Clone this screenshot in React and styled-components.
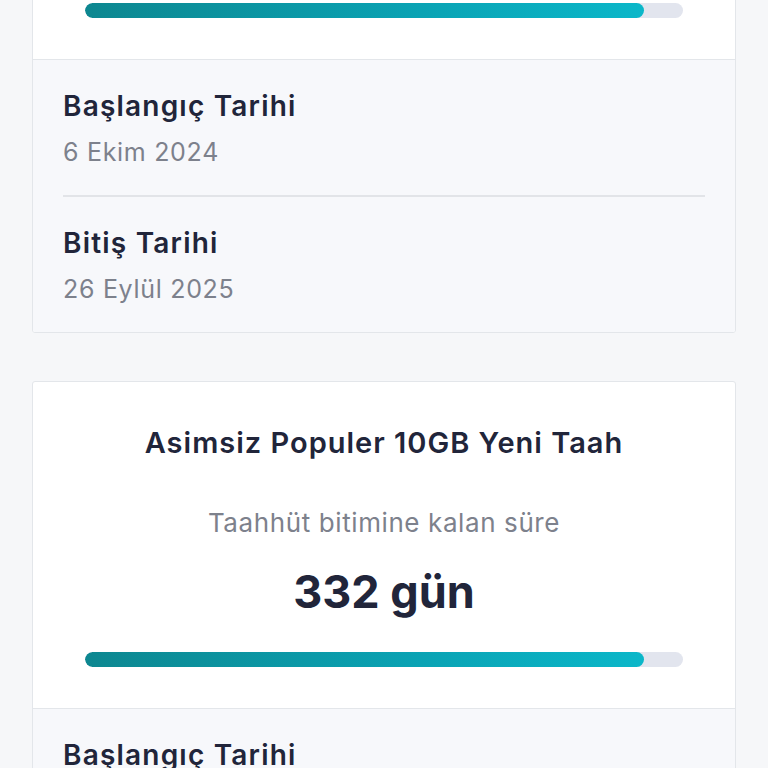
import React from 'react'
import styled, { createGlobalStyle } from 'styled-components'

const GlobalStyle = createGlobalStyle`
  html, body {
    margin: 0;
    padding: 0;
    background: #f6f7f9;
  }
  body {
    font-family: 'Inter', 'Lato', sans-serif;
    color: #21253a;
  }
`

const Page = styled.div`
  width: 768px;
  height: 768px;
  overflow: hidden;
`

// view is scrolled: the first card's top lies above the window
const List = styled.div`
  display: flex;
  flex-direction: column;
  gap: 48px;
  padding: 0 32px;
  margin-top: -268px;
`

const Card = styled.div`
  background: #fff;
  border: 1.5px solid #e3e6ea;
  border-radius: 3px;
  overflow: hidden;
`

const Summary = styled.div`
  display: flex;
  flex-direction: column;
  align-items: center;
  padding: 43px 52px 41px;
  border-bottom: 1.5px solid #e3e6ea;
`

const PlanName = styled.div`
  font-size: 29px;
  font-weight: 600;
  line-height: 36px;
  letter-spacing: 1px;
`

const RemainLabel = styled.div`
  margin-top: 46px;
  font-size: 26px;
  line-height: 32px;
  color: #7d818c;
  letter-spacing: 0.6px;
`

const RemainValue = styled.div`
  margin-top: 25px;
  font-size: 45px;
  font-weight: 700;
  line-height: 56px;
`

const Track = styled.div`
  margin-top: 32px;
  align-self: stretch;
  height: 15px;
  border-radius: 8px;
  background: #e2e5ee;
  overflow: hidden;
`

const Fill = styled.div`
  height: 100%;
  border-radius: 8px;
  background: linear-gradient(90deg, #0d8790 0%, #0aa3b4 60%, #0bb7c9 100%);
`

const Dates = styled.div`
  background: #f7f8fb;
  padding: 0 30px;
`

const DateRow = styled.div`
  padding: 28px 0 27px;
  & + & {
    border-top: 2px solid #e2e4e8;
  }
`

const DateLabel = styled.div`
  font-size: 28px;
  font-weight: 600;
  line-height: 36px;
  letter-spacing: 1.2px;
`

const DateValue = styled.div`
  margin-top: 12px;
  font-size: 25px;
  line-height: 32px;
  color: #7d818c;
  letter-spacing: 0.7px;
`

const plans = [
  { name: 'Asimsiz Populer 10GB Yeni Taah', days: 332, total: 355, start: '6 Ekim 2024', end: '26 Eylül 2025' },
  { name: 'Asimsiz Populer 10GB Yeni Taah', days: 332, total: 355, start: '6 Ekim 2024', end: '26 Eylül 2025' },
]

function PlanCard({ plan }) {
  const pct = (plan.days / plan.total) * 100
  return (
    <Card>
      <Summary>
        <PlanName>{plan.name}</PlanName>
        <RemainLabel>Taahhüt bitimine kalan süre</RemainLabel>
        <RemainValue>{plan.days} gün</RemainValue>
        <Track>
          <Fill style={{ width: `${pct}%` }} />
        </Track>
      </Summary>
      <Dates>
        <DateRow>
          <DateLabel>Başlangıç Tarihi</DateLabel>
          <DateValue>{plan.start}</DateValue>
        </DateRow>
        <DateRow>
          <DateLabel>Bitiş Tarihi</DateLabel>
          <DateValue>{plan.end}</DateValue>
        </DateRow>
      </Dates>
    </Card>
  )
}

export default function App() {
  return (
    <Page>
      <GlobalStyle />
      <List>
        {plans.map((p, i) => (
          <PlanCard key={i} plan={p} />
        ))}
      </List>
    </Page>
  )
}
